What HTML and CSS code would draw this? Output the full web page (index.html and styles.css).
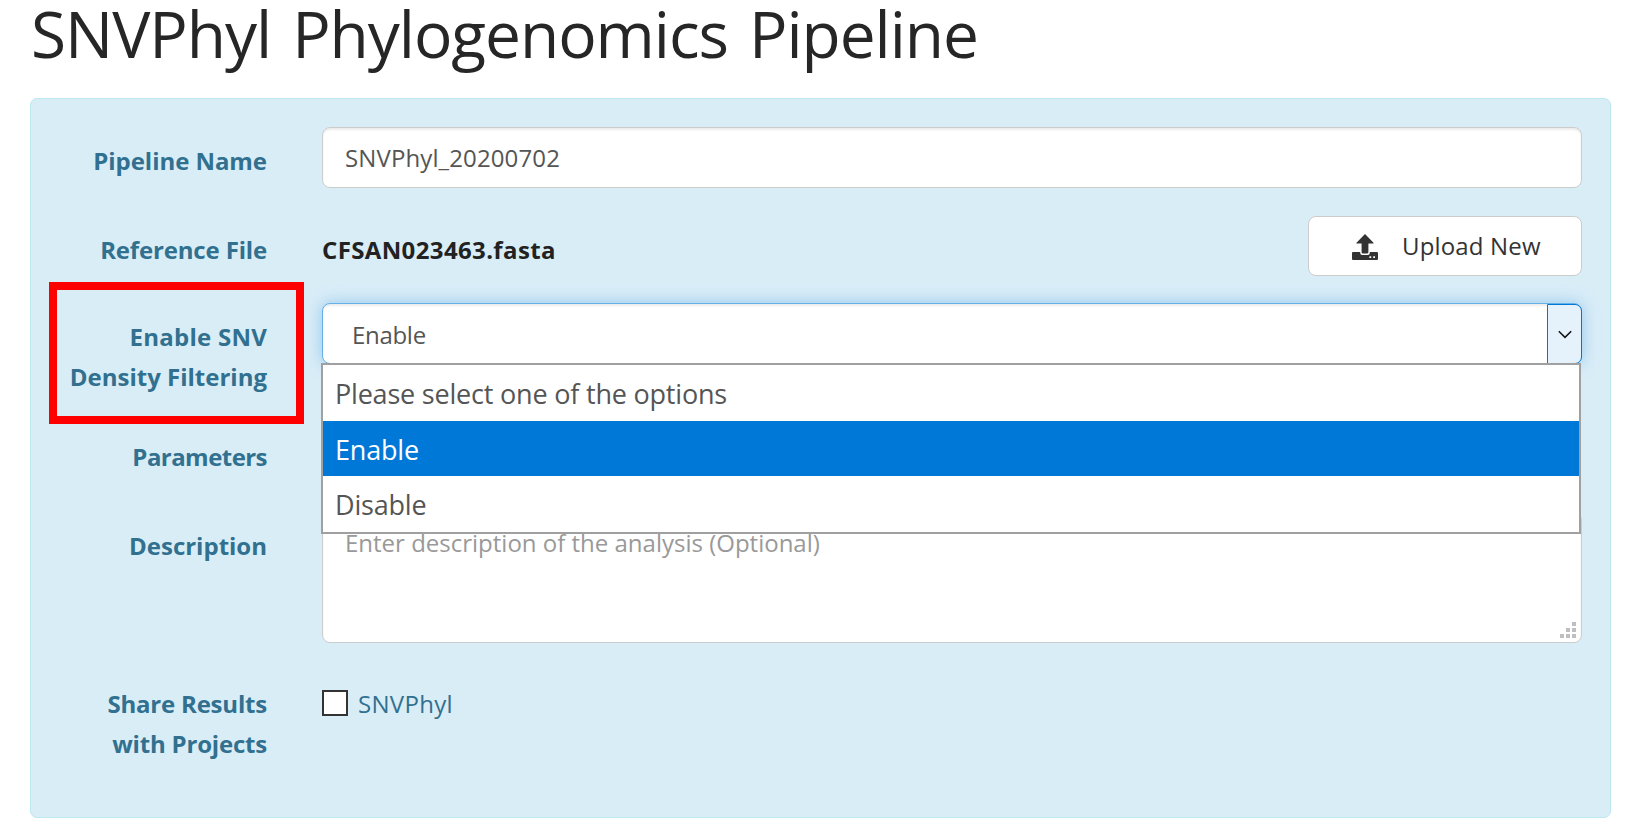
FILE: index.html
```
<!DOCTYPE html>
<html lang="en">
<head>
<meta charset="utf-8">
<title>SNVPhyl Phylogenomics Pipeline</title>
<link rel="stylesheet" href="styles.css">
</head>
<body>
<h1 class="page-title">SNVPhyl Phylogenomics Pipeline</h1>
<form class="panel">
  <div class="row row-name">
    <label class="row-label">Pipeline Name</label>
    <div class="row-body"><div class="input">SNVPhyl_20200702</div></div>
  </div>
  <div class="row row-reference">
    <label class="row-label">Reference File</label>
    <div class="row-body reference">
      <strong class="file-name">CFSAN023463.fasta</strong>
      <button type="button" class="upload">
        <svg class="upload-icon" viewBox="0 0 26 26"><path fill="#333" d="M13 0 21.5 8.7V9.6H16.4V18.3Q16.4 19.6 15 19.6H11Q9.6 19.6 9.6 18.3V9.6H4.5V8.7Z"/><path fill="#333" d="M1 17.9H8.2V19Q8.2 21 10.2 21H15.8Q17.8 21 17.8 19V17.9H25Q26 17.9 26 18.9V25Q26 26 25 26H1Q0 26 0 25V18.9Q0 17.9 1 17.9Z"/><path fill="#fff" d="M17.4 22.2h1.8v1.8h-1.8zM21.2 22.2H23v1.8h-1.8z"/></svg>
        <span>Upload New</span>
      </button>
    </div>
  </div>
  <div class="row row-density">
    <label class="row-label highlighted"><span class="wide">Enable SNV</span><br>Density Filtering</label>
    <div class="row-body select-wrap">
      <div class="select">
        <span class="select-value">Enable</span>
        <span class="select-arrow"><svg class="chevron" viewBox="0 0 14 9"><path d="M.8 1.2 7 7.4 13.2 1.2" fill="none" stroke="#111" stroke-width="1.5"/></svg></span>
      </div>
      <ul class="menu">
        <li class="option">Please select one of the options</li>
        <li class="option selected">Enable</li>
        <li class="option">Disable</li>
      </ul>
    </div>
  </div>
  <div class="row row-parameters">
    <label class="row-label">Parameters</label>
    <div class="row-body"></div>
  </div>
  <div class="row row-description">
    <label class="row-label">Description</label>
    <div class="row-body">
      <div class="textarea">Enter description of the analysis (Optional)
        <svg class="grip" viewBox="0 0 16 16"><path fill="#bfbfbf" d="M12 0h4v4h-4zM6 6h4v4H6zM12 6h4v4h-4zM0 12h4v4H0zM6 12h4v4H6zM12 12h4v4h-4z"/></svg>
      </div>
    </div>
  </div>
  <div class="row row-share">
    <label class="row-label">Share Results<br>with Projects</label>
    <div class="row-body share"><span class="checkbox"></span><span class="share-name">SNVPhyl</span></div>
  </div>
</form>
</body>
</html>
```
FILE: styles.css
```
*, *::after { box-sizing: border-box; }
body {
  margin: 0;
  width: 1636px;
  height: 838px;
  overflow: hidden;
  background: #fff;
  color: #222;
  font: 24px/40px "Open Sans", "Noto Sans", sans-serif;
}
.page-title {
  height: 98px;
  margin: 0;
  padding-left: 31px;
  font-size: 64px;
  font-weight: 400;
  line-height: 67px;
  letter-spacing: -1.05px;
  word-spacing: 5.5px;
  color: #262626;
  white-space: nowrap;
}
.panel {
  display: flex;
  flex-direction: column;
  width: 1581px;
  height: 720px;
  margin: 0 0 0 30px;
  padding: 28px 28px 0 18px;
  background: #d9edf7;
  border: 1px solid #bce8f1;
  border-radius: 7px;
}
.row { display: flex; flex: none; }
.row-name { height: 89px; }
.row-reference { height: 87px; }
.row-density { height: 120px; }
.row-parameters { height: 89px; }
.row-description { height: 158px; }
.row-share { height: 120px; }
.row-label {
  flex: none;
  position: relative;
  width: 218px;
  padding-top: 14px;
  text-align: right;
  font-weight: 700;
  color: #31708f;
  white-space: nowrap;
}
.row-name .row-label { letter-spacing: -.05px; }
.row-reference .row-label { letter-spacing: -.16px; }
.row-parameters .row-label { letter-spacing: -.55px; }
.row-share .row-label { letter-spacing: -.2px; }
.wide { letter-spacing: .25px; }
.highlighted::after {
  content: "";
  position: absolute;
  left: 0;
  top: -21px;
  width: 255px;
  height: 142px;
  border: 8px solid #f00;
}
.row-body { flex: none; width: 1260px; margin-left: 55px; }
.input, .select, .textarea {
  background: #fff;
  border: 1px solid #ccc;
  border-radius: 8px;
  box-shadow: inset 0 2px 2px rgba(0, 0, 0, .075);
}
.input {
  height: 61px;
  padding: 10px 22px 0;
  letter-spacing: .12px;
  color: #555;
}
.reference { display: flex; justify-content: space-between; }
.file-name { padding-top: 14px; letter-spacing: .37px; }
.upload {
  display: flex;
  align-items: flex-start;
  gap: 24px;
  width: 274px;
  height: 60px;
  padding: 9px 0 0 43px;
  border: 1px solid #ccc;
  border-radius: 8px;
  background: #fff;
  color: #333;
  font: inherit;
  letter-spacing: .17px;
  white-space: nowrap;
}
.upload-icon { flex: none; width: 26px; height: 26px; margin-top: 8px; }
.select-wrap { position: relative; }
.select {
  display: flex;
  justify-content: space-between;
  height: 61px;
  border-color: #66afe9;
  color: #555;
  box-shadow: inset 0 2px 2px rgba(0, 0, 0, .075), 0 0 16px rgba(102, 175, 233, .6);
}
.select-value { padding: 11px 0 0 29px; letter-spacing: -.3px; }
.select-arrow {
  display: flex;
  justify-content: center;
  width: 35px;
  height: 60px;
  margin-right: -1px;
  padding-top: 25px;
  background: #e5f1fb;
  border: 1px solid #0078d7;
  border-radius: 0 7px 7px 0;
}
.chevron { width: 14px; height: 9px; }
.menu {
  position: absolute;
  z-index: 2;
  left: -1px;
  top: 60px;
  width: 1260px;
  margin: 0;
  padding: 0;
  list-style: none;
  background: #fff;
  border: 2px solid #a0a0a0;
}
.option {
  height: 56px;
  padding-left: 12px;
  font-size: 27px;
  line-height: 58px;
  letter-spacing: -.2px;
  color: #555;
}
.option.selected { height: 55px; background: #0078d7; color: #fff; }
.textarea {
  position: relative;
  height: 131px;
  padding: 10px 22px 0;
  color: #999;
}
.grip { position: absolute; right: 5px; bottom: 4px; width: 16px; height: 16px; }
.share { display: flex; color: #31708f; }
.checkbox {
  width: 26px;
  height: 26px;
  margin: 20px 10px 0 0;
  border: 2px solid #333;
  background: #fff;
}
.share-name { padding-top: 14px; letter-spacing: .3px; }
```
